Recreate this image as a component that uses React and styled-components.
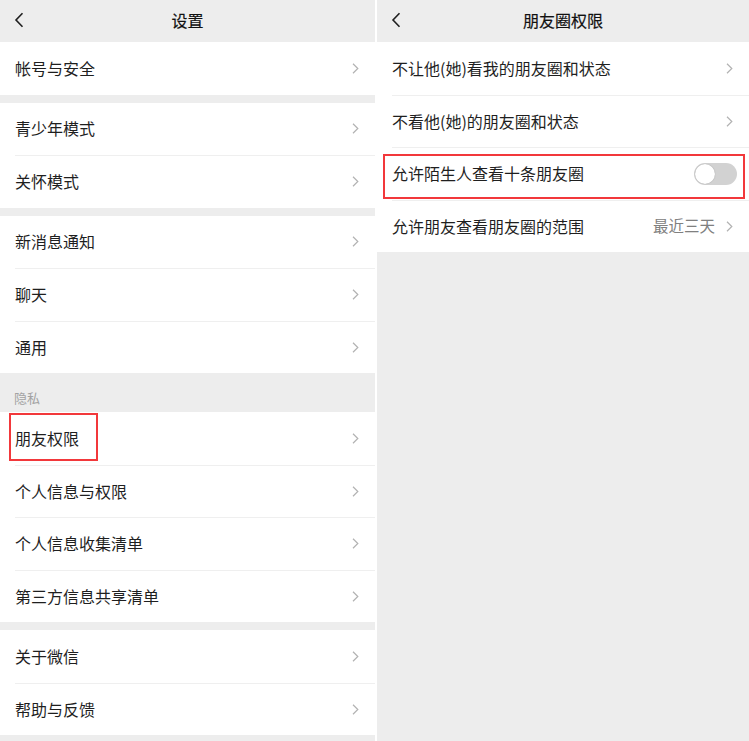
import styled, { createGlobalStyle } from "styled-components";

const GlobalStyle = createGlobalStyle`
  html, body {
    margin: 0;
    padding: 0;
    background: #ffffff;
  }
  body {
    font-family: "Noto Sans CJK SC", "Noto Sans", sans-serif;
    -webkit-font-smoothing: antialiased;
  }
`;

const settingsGroups = [
  { items: ["帐号与安全"] },
  { items: ["青少年模式", "关怀模式"] },
  { items: ["新消息通知", "聊天", "通用"] },
  {
    label: "隐私",
    items: ["朋友权限", "个人信息与权限", "个人信息收集清单", "第三方信息共享清单"],
    marked: "朋友权限",
  },
  { items: ["关于微信", "帮助与反馈"] },
];

const momentRows = [
  { id: 1, text: "不让他(她)看我的朋友圈和状态" },
  { id: 2, text: "不看他(她)的朋友圈和状态" },
  { id: 3, text: "允许陌生人查看十条朋友圈", toggle: true },
  { id: 4, text: "允许朋友查看朋友圈的范围", value: "最近三天" },
];

const BackIcon = () => (
  <svg width="10" height="16" viewBox="0 0 10 16">
    <path d="M8.5 1.2 L2 8 L8.5 14.8" fill="none" stroke="#1f1f1f" strokeWidth="1.6" />
  </svg>
);

const Chevron = () => (
  <svg width="7" height="11" viewBox="0 0 7 11">
    <path d="M1 0.8 L5.8 5.5 L1 10.2" fill="none" stroke="#b2b2b2" strokeWidth="1.2" />
  </svg>
);

const App = () => {
  return (
    <>
      <GlobalStyle />
      <Page>
        <Screen>
          <Header>
            <BackButton>
              <BackIcon />
            </BackButton>
            <Title>设置</Title>
          </Header>
          {settingsGroups.map((group, gi) => (
            <Group key={gi}>
              {group.label ? <SectionLabel>{group.label}</SectionLabel> : <Spacer first={gi === 0} />}
              <List>
                {group.items.map((item) => (
                  <Row key={item}>
                    {group.marked === item && <Mark />}
                    <RowText>{item}</RowText>
                    <Chevron />
                  </Row>
                ))}
              </List>
            </Group>
          ))}
        </Screen>

        <Screen grow>
          <Header>
            <BackButton>
              <BackIcon />
            </BackButton>
            <Title>朋友圈权限</Title>
          </Header>
          <List>
            {momentRows.map(({ id, text, toggle, value }) => (
              <Row key={id}>
                {toggle && <WideMark />}
                <RowText>{text}</RowText>
                {toggle ? (
                  <Switch>
                    <Knob />
                  </Switch>
                ) : (
                  <RowRight>
                    {value && <Value>{value}</Value>}
                    <Chevron />
                  </RowRight>
                )}
              </Row>
            ))}
          </List>
        </Screen>
      </Page>
    </>
  );
};

export default App;

const Page = styled.div`
  width: 749px;
  height: 741px;
  display: flex;
  gap: 2px;
  background: #ffffff;
  overflow: hidden;
`;

const Screen = styled.div`
  width: 375px;
  flex: ${({ grow }) => (grow ? "1" : "none")};
  background: #ededed;
  display: flex;
  flex-direction: column;
`;

const Header = styled.div`
  height: 42px;
  flex: none;
  position: relative;
  display: flex;
  align-items: center;
  justify-content: center;
  background: #ededed;
`;

const BackButton = styled.div`
  position: absolute;
  left: 14px;
  top: 12px;
  display: flex;
`;

const Title = styled.div`
  font-size: 16px;
  font-weight: 400;
  color: #111111;
  line-height: 1;
  margin-top: -2px;
  -webkit-text-stroke: 0.2px #111111;
`;

const Group = styled.div`
  display: flex;
  flex-direction: column;
`;

const Spacer = styled.div`
  height: ${({ first }) => (first ? "0" : "8px")};
  flex: none;
`;

const SectionLabel = styled.div`
  height: 39px;
  box-sizing: border-box;
  padding: 16px 0 0 14px;
  font-size: 13px;
  color: #a3a3a3;
  line-height: 18px;
`;

const List = styled.div`
  background: #ffffff;
  display: flex;
  flex-direction: column;
`;

const Row = styled.div`
  position: relative;
  height: 52.5px;
  flex: none;
  margin-left: 15px;
  padding-right: 16px;
  display: flex;
  align-items: center;
  justify-content: space-between;
  box-sizing: border-box;

  & + & {
    border-top: 1px solid #efefef;
  }
`;

const RowText = styled.div`
  font-size: 16px;
  color: #1f1f1f;
  line-height: 1;
  margin-top: -1px;
`;

const Mark = styled.div`
  position: absolute;
  left: -6px;
  top: 1px;
  width: 89px;
  height: 48px;
  box-sizing: border-box;
  border: 2.5px solid #f2383b;
  pointer-events: none;
`;

const WideMark = styled.div`
  position: absolute;
  left: -9px;
  right: 4px;
  top: 6px;
  height: 45px;
  box-sizing: border-box;
  border: 2.5px solid #f2383b;
  pointer-events: none;
`;

const RowRight = styled.div`
  display: flex;
  align-items: center;
  gap: 11px;
`;

const Value = styled.div`
  font-size: 15.5px;
  color: #808080;
  line-height: 1;
  margin-top: -1px;
`;

const Switch = styled.div`
  position: relative;
  width: 43px;
  height: 22px;
  margin-right: -4px;
  border-radius: 11px;
  background: #d2d2d2;
  box-sizing: border-box;
`;

const Knob = styled.div`
  position: absolute;
  left: 1px;
  top: 1px;
  width: 20px;
  height: 20px;
  border-radius: 50%;
  background: #ffffff;
  box-shadow: 0 0 1px rgba(0, 0, 0, 0.35);
`;
